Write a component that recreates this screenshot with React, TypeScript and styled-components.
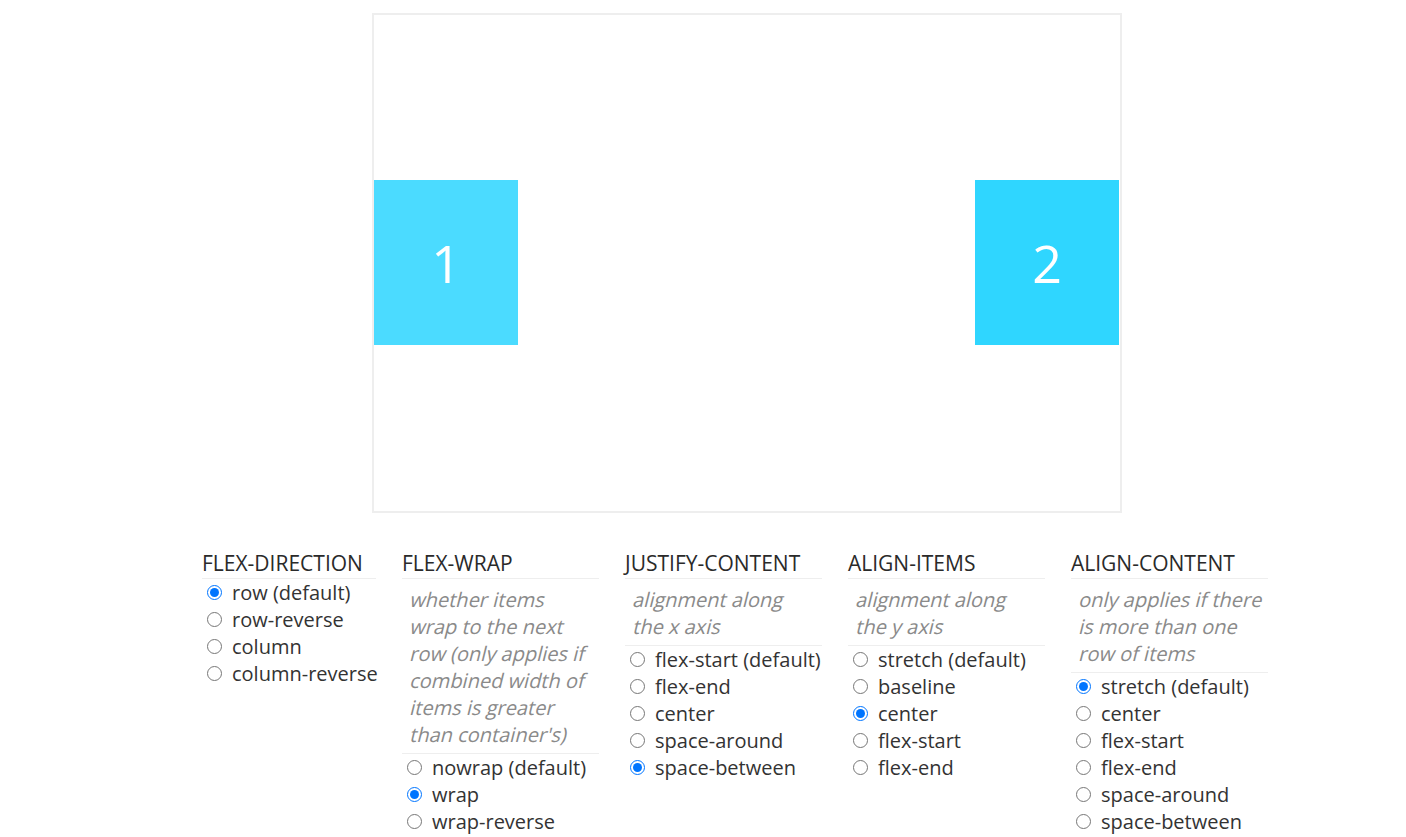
import React from "react";
import styled, { createGlobalStyle } from "styled-components";

const Global = createGlobalStyle`
  html, body { margin: 0; padding: 0; background: #fff; }
  body { font-family: "Open Sans", "DejaVu Sans", sans-serif; color: #333; }
`;

const Page = styled.div`
  display: flex;
  flex-direction: column;
  align-items: flex-start;
  padding-top: 13px;
`;

const Stage = styled.div`
  box-sizing: border-box;
  width: 750px;
  height: 500px;
  margin-left: 372px;
  padding-right: 1px;
  border: 2px solid #eeeeee;
  display: flex;
  flex-direction: row;
  flex-wrap: wrap;
  justify-content: space-between;
  align-items: center;
  align-content: stretch;
`;

const Item = styled.div<{ $bg: string }>`
  width: 144px;
  height: 165px;
  margin-bottom: 1px;
  background: ${(p) => p.$bg};
  color: #fff;
  font-size: 52px;
  display: flex;
  align-items: center;
  justify-content: center;
`;

const Controls = styled.div`
  display: flex;
  align-items: flex-start;
  margin-top: 35px;
  margin-left: 202px;
  gap: 26px;
`;

const Column = styled.div<{ $w: number }>`
  width: ${(p) => p.$w}px;
  flex: none;
`;

const Heading = styled.div`
  font-size: 21px;
  line-height: 30px;
  height: 30px;
  text-transform: uppercase;
  color: #2a2a2a;
  border-bottom: 1px solid #eeeeee;
  white-space: nowrap;
`;

const Desc = styled.div`
  font-size: 20px;
  line-height: 27px;
  color: #8a8a8a;
  padding: 7px 0 5px 7px;
  border-bottom: 1px solid #eeeeee;
`;

const DescLine = styled.span`
  display: block;
  white-space: nowrap;
  transform: skewX(-14deg);
  transform-origin: 0 21px;
`;

const Options = styled.div`
  display: flex;
  flex-direction: column;
`;

const Option = styled.label`
  display: flex;
  align-items: center;
  font-size: 20px;
  line-height: 27px;
  height: 27px;
  white-space: nowrap;
  color: #333;
`;

const Radio = styled.input`
  width: 15px;
  height: 15px;
  margin: 0 10px 0 5px;
  flex: none;
`;

type Group = {
  name: string;
  width: number;
  desc?: string[];
  options: string[];
  selected: string;
};

const groups: Group[] = [
  {
    name: "flex-direction",
    width: 174,
    options: ["row (default)", "row-reverse", "column", "column-reverse"],
    selected: "row (default)",
  },
  {
    name: "flex-wrap",
    width: 197,
    desc: [
      "whether items",
      "wrap to the next",
      "row (only applies if",
      "combined width of",
      "items is greater",
      "than container's)",
    ],
    options: ["nowrap (default)", "wrap", "wrap-reverse"],
    selected: "wrap",
  },
  {
    name: "justify-content",
    width: 197,
    desc: ["alignment along", "the x axis"],
    options: ["flex-start (default)", "flex-end", "center", "space-around", "space-between"],
    selected: "space-between",
  },
  {
    name: "align-items",
    width: 197,
    desc: ["alignment along", "the y axis"],
    options: ["stretch (default)", "baseline", "center", "flex-start", "flex-end"],
    selected: "center",
  },
  {
    name: "align-content",
    width: 197,
    desc: ["only applies if there", "is more than one", "row of items"],
    options: ["stretch (default)", "center", "flex-start", "flex-end", "space-around", "space-between"],
    selected: "stretch (default)",
  },
];

export default function App() {
  return (
    <>
      <Global />
      <Page>
        <Stage>
          <Item $bg="#4bdbff">1</Item>
          <Item $bg="#2fd6ff">2</Item>
        </Stage>
        <Controls>
          {groups.map((g) => (
            <Column key={g.name} $w={g.width}>
              <Heading>{g.name}</Heading>
              {g.desc && (
                <Desc>
                  {g.desc.map((l) => (
                    <DescLine key={l}>{l}</DescLine>
                  ))}
                </Desc>
              )}
              <Options>
                {g.options.map((o) => (
                  <Option key={o}>
                    <Radio type="radio" name={g.name} defaultChecked={o === g.selected} />
                    {o}
                  </Option>
                ))}
              </Options>
            </Column>
          ))}
        </Controls>
      </Page>
    </>
  );
}
